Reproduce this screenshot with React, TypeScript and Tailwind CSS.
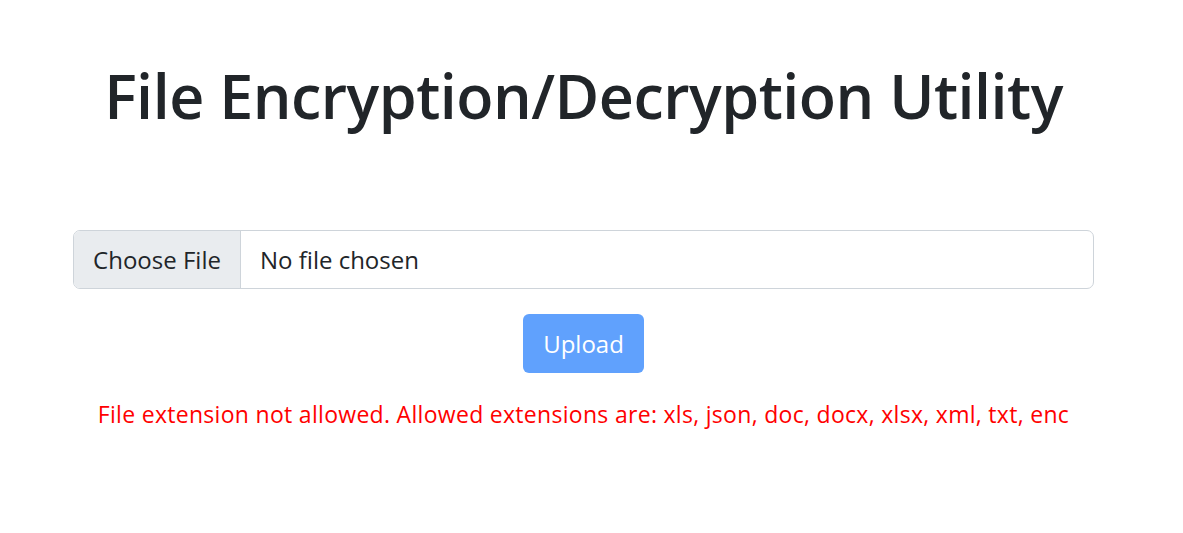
export default function App() {
  return (
    <div className="min-h-screen bg-white text-[#212529]" style={{ fontFamily: '"Open Sans", "Noto Sans", sans-serif' }}>
      <div className="w-[1167px]">
        <div className="mx-auto w-[1021px] flex flex-col items-center">
          <h1 className="mt-[56px] text-[61px] leading-[80px] font-semibold tracking-[-0.5px] text-[#212529]">
            File Encryption/Decryption Utility
          </h1>
          <div className="mt-[94px] w-full h-[59px] flex border border-[#ced4da] rounded-[7px] overflow-hidden">
            <div className="w-[167px] shrink-0 bg-[#e9ecef] border-r border-[#ced4da] flex items-center justify-center text-[24px]">
              Choose File
            </div>
            <div className="flex items-center pl-[19px] text-[24px]">No file chosen</div>
          </div>
          <button className="mt-[25px] w-[121px] h-[59px] rounded-[6px] bg-[#60a1fd] text-white text-[24px]">
            Upload
          </button>
          <p className="mt-[24px] text-[23px] tracking-[0.3px] text-[#ff0000]">
            File extension not allowed. Allowed extensions are: xls, json, doc, docx, xlsx, xml, txt, enc
          </p>
        </div>
      </div>
    </div>
  );
}
